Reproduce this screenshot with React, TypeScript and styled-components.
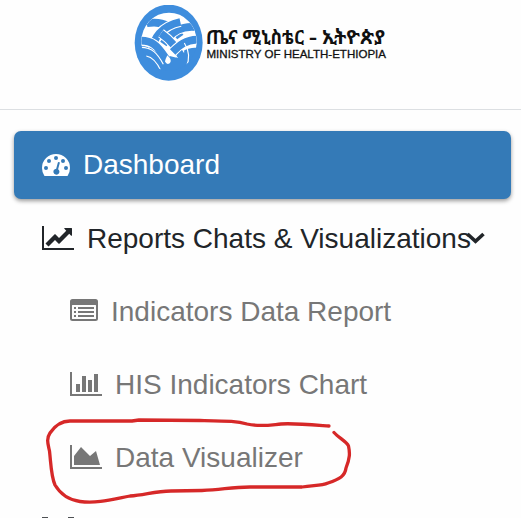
import React from 'react';
import styled, { createGlobalStyle } from 'styled-components';

const GlobalStyle = createGlobalStyle`
  html, body { margin: 0; background: #fefefe; }
  body { overflow: hidden; }
`;

const Sidebar = styled.aside`
  position: relative;
  width: 521px;
  height: 518px;
  overflow: hidden;
  background: #fefefe;
  font-family: "Liberation Sans", Arial, sans-serif;
`;

const Header = styled.header`
  box-sizing: border-box;
  height: 110px;
  padding: 5px 0 0 134px;
  border-bottom: 1px solid #dcdfe2;
`;

const Brand = styled.div`
  display: flex;
  align-items: flex-start;
`;

const BrandMark = styled.svg`
  display: block;
  flex: none;
`;

const BrandText = styled.svg`
  display: block;
  flex: none;
  overflow: visible;
`;

const Menu = styled.nav`
  display: flex;
  flex-direction: column;
  gap: 5px;
  padding: 21px 10px 0 14px;
`;

const MenuItem = styled.a<{ $tone?: 'active' | 'dark' | 'muted'; $nested?: boolean }>`
  box-sizing: border-box;
  display: flex;
  align-items: center;
  flex: none;
  gap: 13px;
  height: 68px;
  padding-left: ${p => (p.$nested ? 56 : 28)}px;
  border-radius: 7px;
  font-size: 28px;
  line-height: 42px;
  white-space: nowrap;
  color: ${p => (p.$tone === 'active' ? '#fff' : p.$tone === 'dark' ? '#212529' : '#777')};
  background: ${p => (p.$tone === 'active' ? '#347ab7' : 'transparent')};
  box-shadow: ${p => (p.$tone === 'active' ? '0 2px 4px rgba(0,0,0,.4)' : 'none')};
`;

const Label = styled.span<{ $drop?: number }>`
  padding-top: ${p => p.$drop ?? 2}px;
`;

const Icon = styled.svg<{ $lift?: number }>`
  display: block;
  flex: none;
  fill: currentColor;
  margin-bottom: ${p => p.$lift ?? 0}px;
`;

const Chevron = styled.svg`
  display: block;
  flex: none;
  margin-left: -19px;
`;

const Highlight = styled.svg`
  position: absolute;
  left: 40px;
  top: 410px;
  pointer-events: none;
`;

const axes = 'M2048 1408v128H0V0h128v1408z';

const Gauge = () => (
  <Icon width="28" height="22" viewBox="0 0 28 22">
    <path
      fillRule="evenodd"
      d="M14 0a14 14 0 0 1 14 14q0 4.100-2.200 7.500-.3.500-.9.500H3.100q-.6 0-.9-.5Q0 18.100 0 14A14 14 0 0 1 14 0zM4 12a2 2 0 1 0 0 4 2 2 0 0 0 0-4zM7 5a2 2 0 1 0 0 4 2 2 0 0 0 0-4zM14 2a2 2 0 1 0 0 4 2 2 0 0 0 0-4zM21 5a2 2 0 1 0 0 4 2 2 0 0 0 0-4zM24 12a2 2 0 1 0 0 4 2 2 0 0 0 0-4zM17 8a1 1 0 0 0-1.200.7l-1.600 6a3 3 0 1 0 1.900.5l1.600-6a1 1 0 0 0-.7-1.200z"
    />
  </Icon>
);

const LineChart = () => (
  <Icon width="32" height="24" viewBox="0 0 2048 1536">
    <path d={axes} />
    <path d="M1920 160v435q0 21-19.500 29.500t-35.500-7.500l-121-121-633 633q-10 10-23 10t-23-10l-233-233-416 416-192-192 585-585q10-10 23-10t23 10l233 233 464-464-121-121q-16-16-7.500-35.500t29.500-19.500h435q14 0 23 9t9 23z" />
  </Icon>
);

const ListPanel = () => (
  <Icon width="28" height="22" viewBox="0 0 28 22" $lift={2}>
    <path
      fillRule="evenodd"
      d="M2.500 0h23A2.500 2.500 0 0 1 28 2.500v17a2.500 2.500 0 0 1-2.500 2.500h-23A2.500 2.500 0 0 1 0 19.500v-17A2.500 2.500 0 0 1 2.500 0zM2 6.500v13q0 .5.500.5h23q.5 0 .5-.5v-13q0-.5-.5-.5h-23q-.5 0-.5.500z"
    />
    <path d="M4 8h2v2H4zM4 12h2v2H4zM4 16h2v2H4zM8 8h16v2H8zM8 12h16v2H8zM8 16h16v2H8z" />
  </Icon>
);

const BarChart = () => (
  <Icon width="32" height="24" viewBox="0 0 2048 1536">
    <path d={axes} />
    <path d="M384 768h256v512H384zM768 256h256v1024H768zM1152 512h256v768h-256zM1536 128h256v1152h-256z" />
  </Icon>
);

const AreaChart = () => (
  <Icon width="32" height="24" viewBox="0 0 2048 1536">
    <path d={axes} />
    <path d="M1664 384l256 896H256V704l448-576 576 576z" />
  </Icon>
);

const Binoculars = () => (
  <Icon width="32" height="26" viewBox="0 0 32 26" opacity=".8">
    <path d="M0 0h6v8H0zM26 0h6v8h-6zM0 8h32v16H0z" />
  </Icon>
);

const blue = '#3e8ddd';

const Band = ({ d, width = 23 }: { d: string; width?: number }) => (
  <>
    <path d={d} stroke="#fff" strokeWidth={width + 6} />
    <path d={d} stroke={blue} strokeWidth={width} />
  </>
);

export default function App() {
  return (
    <Sidebar>
      <GlobalStyle />
      <Header>
        <Brand>
          <BrandMark width="70" height="77" viewBox="12 15 210 231">
            <defs>
              <clipPath id="weave">
                <ellipse cx="117" cy="125" rx="83" ry="87" />
              </clipPath>
            </defs>
            <ellipse cx="116" cy="128" rx="102" ry="114" fill={blue} />
            <g clipPath="url(#weave)" fill="none">
              <path d="M25 30H210V145C180 138 160 150 143 168L125 190L104 182C85 148 55 137 25 138Z" fill="#fff" />
              <Band d="M50 70C95 61 127 78 151 111" />
              <Band d="M205 82C153 75 126 94 100 132" />
              <Band d="M70 152C66 115 96 78 151 66" />
              <Band d="M20 123C73 116 88 147 112 181" />
              <Band d="M93 100C119 118 142 143 161 181" />
              <Band d="M208 119C164 118 145 139 128 156" />
              <path d="M25 145C70 140 87 157 108 190L119 168L143 174C160 153 182 145 210 147V225H25Z" fill={blue} />
              <path d="M112 166Q128 181 119 190Q109 196 105 184Q106 178 112 166Z" fill="#fff" />
              <path d="M32 142C66 142 82 159 100 193M49 168C70 172 82 188 94 215" stroke="#fff" strokeWidth="3.500" />
              <path d="M163 129Q186 164 168 204" stroke="#fff" strokeWidth="3.500" />
            </g>
          </BrandMark>
          <BrandText width="184" height="60" viewBox="204 5 184 60">
            <text
              y="44" fontSize="20" fontWeight="700" fill="#111"
              fontFamily='"Noto Sans Ethiopic", "Noto Sans", sans-serif'
            >
              <tspan x="206" textLength="98" lengthAdjust="spacingAndGlyphs">ጤና ሚኒስቴር</tspan>
              <tspan x="309" textLength="8" lengthAdjust="spacingAndGlyphs">-</tspan>
              <tspan x="322" textLength="63" lengthAdjust="spacingAndGlyphs">ኢትዮጵያ</tspan>
            </text>
            <text
              x="206.500" y="58" fontSize="11.200" fill="#111" stroke="#111" strokeWidth=".3"
              fontFamily='"Liberation Sans", Arial, sans-serif'
              textLength="179.500" lengthAdjust="spacingAndGlyphs"
            >MINISTRY OF HEALTH-ETHIOPIA</text>
          </BrandText>
        </Brand>
      </Header>
      <Menu>
        <MenuItem $tone="active"><Gauge /><Label $drop={0}>Dashboard</Label></MenuItem>
        <MenuItem $tone="dark">
          <LineChart />
          <Label>Reports Chats &amp; Visualizations</Label>
          <Chevron width="20" height="14" viewBox="0 0 20 14">
            <path d="M2.500 3L10.500 10.400L18.500 3" fill="none" stroke="currentColor" strokeWidth="3.600" />
          </Chevron>
        </MenuItem>
        <MenuItem $nested><ListPanel /><Label>Indicators Data Report</Label></MenuItem>
        <MenuItem $nested><BarChart /><Label>HIS Indicators Chart</Label></MenuItem>
        <MenuItem $nested><AreaChart /><Label>Data Visualizer</Label></MenuItem>
        <MenuItem $tone="dark"><Binoculars /></MenuItem>
      </Menu>
      <Highlight width="320" height="100" viewBox="40 410 320 100">
        <g fill="none" stroke="#d62828" strokeWidth="3.300" strokeLinecap="round" strokeLinejoin="round">
          <path d="M329 426C315 425 292 423 281 424C270 425 259 427 247 424C237 421 228 421 200 420.500L139 420L132 421H70C60 421 54 427 50 433C46 439 48 444 49.500 451C51 464 51 476 55 485C61 495 69 500 80 501.500C97 504 114 499 130 496C145 495 155 491 171 491L202 490.500C222 490 230 487 250 487H302C313 485 321 486 328 483C340 479 345 476 346 468C350 458 350 453 348.500 446C347 442 339 438 334 432.500" />
        </g>
      </Highlight>
    </Sidebar>
  );
}
